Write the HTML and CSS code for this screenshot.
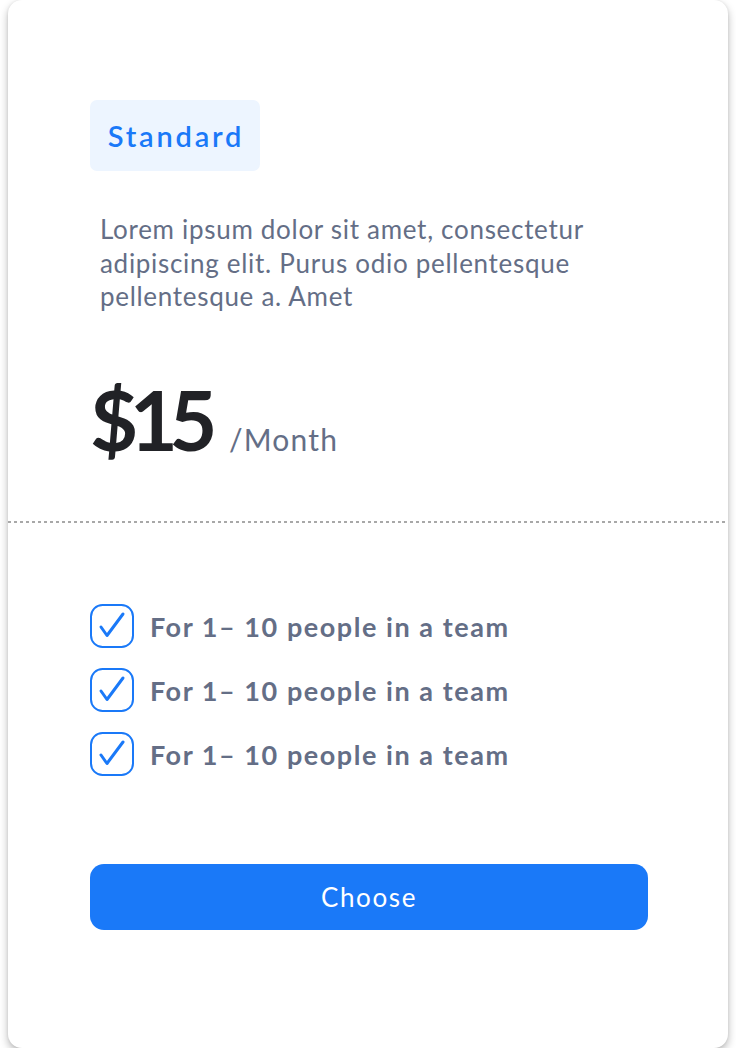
FILE: index.html
```html
<!DOCTYPE html>
<html>
<head>
<meta charset="utf-8">
<link rel="stylesheet" href="styles.css">
</head>
<body>
<div class="card">
  <div class="top">
    <div class="badge">Standard</div>
    <p class="desc">Lorem ipsum dolor sit amet, consectetur adipiscing elit. Purus odio pellentesque pellentesque a. Amet</p>
    <div class="price"><span class="amount">$15</span><span class="period">/Month</span></div>
  </div>
  <div class="divider"></div>
  <div class="bottom">
    <ul class="features">
      <li class="feature">
        <svg class="check" width="44" height="44" viewBox="0 0 44 44"><rect x="1" y="1" width="42" height="42" rx="11.5" fill="none" stroke="#1a79f8" stroke-width="2"/><path d="M11 23 L17 31.5 L33 10" fill="none" stroke="#1a79f8" stroke-width="3" stroke-linecap="round" stroke-linejoin="round"/></svg>
        <span>For 1– 10 people in a team</span>
      </li>
      <li class="feature">
        <svg class="check" width="44" height="44" viewBox="0 0 44 44"><rect x="1" y="1" width="42" height="42" rx="11.5" fill="none" stroke="#1a79f8" stroke-width="2"/><path d="M11 23 L17 31.5 L33 10" fill="none" stroke="#1a79f8" stroke-width="3" stroke-linecap="round" stroke-linejoin="round"/></svg>
        <span>For 1– 10 people in a team</span>
      </li>
      <li class="feature">
        <svg class="check" width="44" height="44" viewBox="0 0 44 44"><rect x="1" y="1" width="42" height="42" rx="11.5" fill="none" stroke="#1a79f8" stroke-width="2"/><path d="M11 23 L17 31.5 L33 10" fill="none" stroke="#1a79f8" stroke-width="3" stroke-linecap="round" stroke-linejoin="round"/></svg>
        <span>For 1– 10 people in a team</span>
      </li>
    </ul>
    <button class="choose">Choose</button>
  </div>
</div>
</body>
</html>
```
FILE: styles.css
```css
* { box-sizing: border-box; }
html, body { margin: 0; padding: 0; background: #fff; }
body { font-family: Lato, "Open Sans", sans-serif; padding: 0 8px; }
.card {
  width: 720px;
  height: 1048px;
  background: #fff;
  border-radius: 14px;
  box-shadow: 0 4px 8px rgba(0,0,0,0.28), 0 0 3px rgba(0,0,0,0.08);
  display: flex;
  flex-direction: column;
}
.top { padding: 100px 82px 0 82px; height: 521px; }
.badge {
  display: inline-flex;
  align-items: center;
  justify-content: center;
  width: 170px;
  height: 71px;
  background: #edf5ff;
  border-radius: 7px;
  color: #1a79f8;
  font-size: 29px;
  font-weight: 600;
  letter-spacing: 2.8px;
  padding-left: 2px;
}
.desc {
  margin: 42px 0 0 10px;
  color: #646e86;
  font-size: 26px;
  line-height: 33.5px;
  letter-spacing: 0.7px;
  width: 520px;
}
.price { display: flex; align-items: baseline; margin-top: 64px; margin-left: 0; }
.amount { font-size: 83px; font-weight: 700; color: #212226; letter-spacing: -8.5px; line-height: 1; }
.period { font-size: 30px; color: #646e86; margin-left: 20px; letter-spacing: 1.2px; }
.divider {
  height: 2px;
  background: repeating-linear-gradient(90deg, #a8a8a8 0 3px, transparent 3px 6px);
}
.bottom { padding: 81px 80px 0 82px; }
.features { list-style: none; margin: 0; padding: 0; display: flex; flex-direction: column; gap: 20px; }
.feature { display: flex; align-items: center; gap: 16px; height: 44px; }
.check { display: block; flex: none; }
.feature span { font-size: 27px; font-weight: 700; color: #646e86; letter-spacing: 1.55px; }
.choose {
  margin-top: 88px;
  width: 558px;
  height: 66px;
  border: none;
  border-radius: 14px;
  background: #1a79f8;
  color: #fff;
  font-family: inherit;
  font-size: 26px;
  letter-spacing: 1.6px;
}
```
